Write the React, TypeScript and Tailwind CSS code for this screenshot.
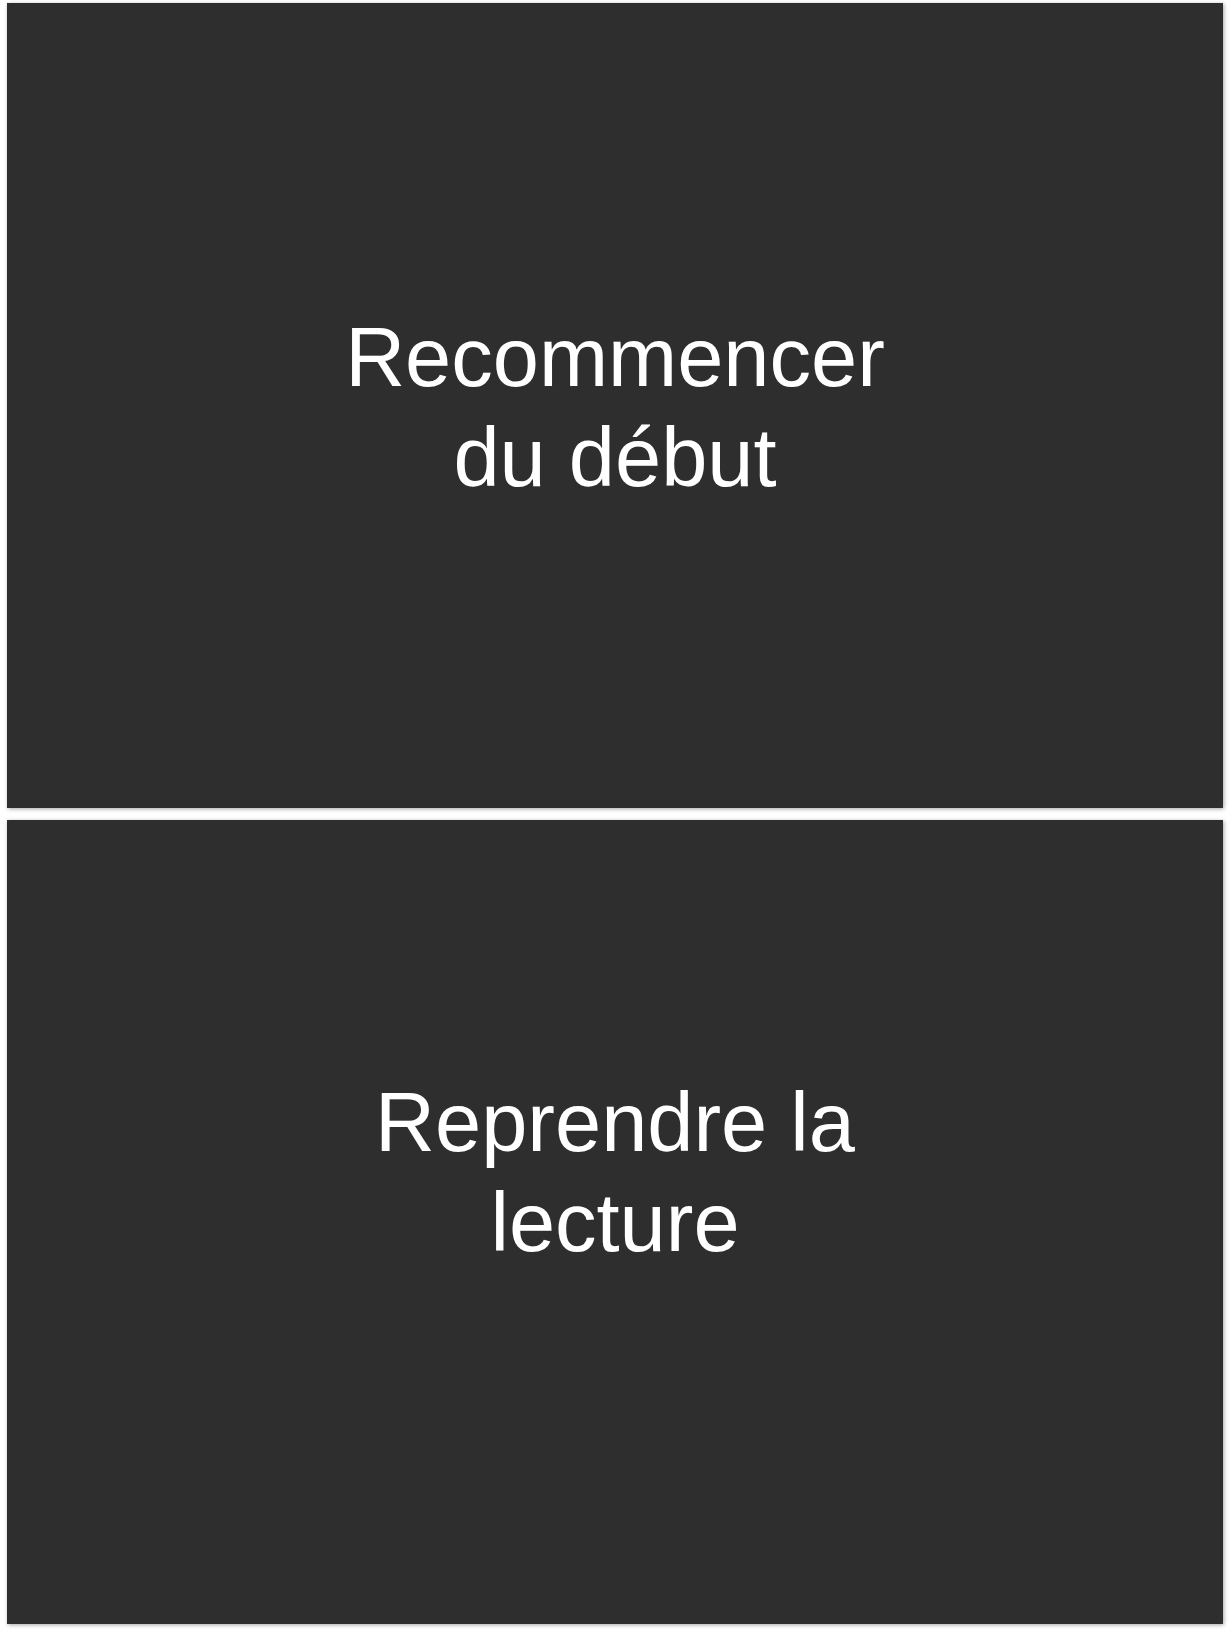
import React from "react";

export default function App() {
  return (
    <div className="w-[1231px] h-[1636px] bg-white pt-[3px] pl-[7px] overflow-hidden">
      <div className="flex flex-col gap-[12px] w-[1216px]">
        <div className="h-[805px] bg-[#2e2e2e] shadow-[1px_1px_4px_rgba(0,0,0,0.35)] flex justify-center items-start pt-[305px]">
          <div
            className="max-w-[620px] text-center text-white text-[83px] leading-[100px]"
            style={{ fontFamily: '"Liberation Sans", Arial, sans-serif' }}
          >
            Recommencer du début
          </div>
        </div>
        <div className="h-[804px] bg-[#2e2e2e] shadow-[1px_1px_4px_rgba(0,0,0,0.35)] flex justify-center items-start pt-[253px]">
          <div
            className="max-w-[620px] text-center text-white text-[83px] leading-[100px]"
            style={{ fontFamily: '"Liberation Sans", Arial, sans-serif' }}
          >
            Reprendre la lecture
          </div>
        </div>
      </div>
    </div>
  );
}
